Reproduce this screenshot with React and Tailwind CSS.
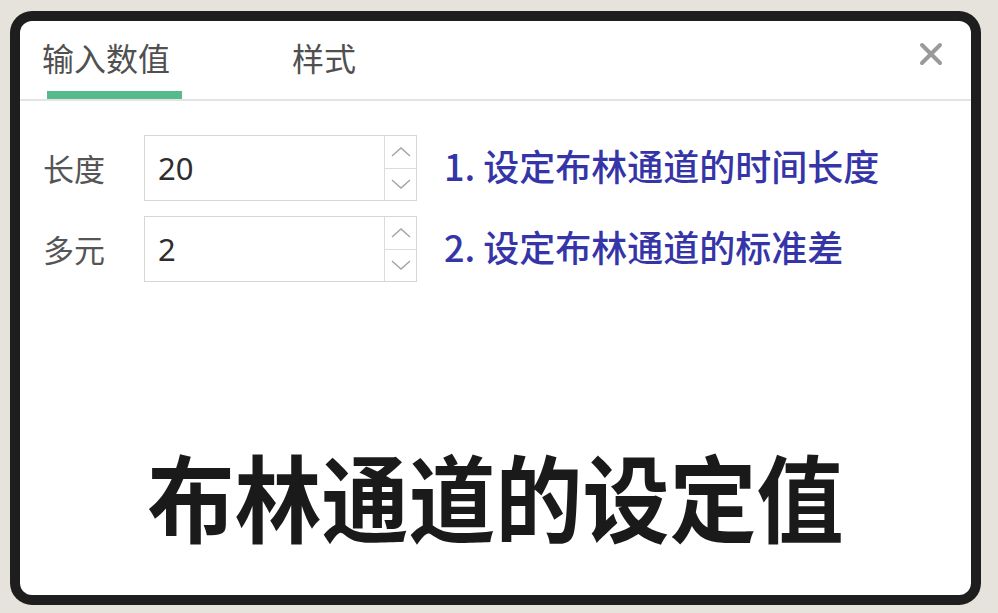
import React from 'react';

const cjk = { fontFamily: '"Noto Sans CJK SC", "Noto Sans", sans-serif' };
const latin = { fontFamily: '"Noto Sans", "Noto Sans CJK SC", sans-serif' };

function Chevron({ up }) {
  return (
    <svg width="22" height="12" viewBox="0 0 22 12" fill="none" stroke="#a3a3a3" strokeWidth="1.4">
      {up ? <path d="M2 10 L11 2 L20 10" /> : <path d="M2 2 L11 10 L20 2" />}
    </svg>
  );
}

function NumberInput({ value }) {
  return (
    <div className="flex w-[273px] h-[66px] border border-[#d6d6d6] bg-white">
      <div className="flex-1 flex items-center pl-[13px] text-[31px] text-[#2e2e2e]" style={latin}>{value}</div>
      <div className="w-[32px] flex flex-col border-l border-[#dcdcdc]">
        <div className="flex-1 flex items-center justify-center border-b border-[#dcdcdc]"><Chevron up /></div>
        <div className="flex-1 flex items-center justify-center"><Chevron /></div>
      </div>
    </div>
  );
}

const rows = [
  { label: '长度', value: '20', note: '1. 设定布林通道的时间长度' },
  { label: '多元', value: '2', note: '2. 设定布林通道的标准差' },
];

export default function App() {
  return (
    <div className="w-[998px] h-[613px] bg-[#e6e3dc] pt-[11px] pl-[10px] pr-[17px] pb-[8px]" style={cjk}>
      <div className="w-full h-full bg-[#1e1e1e] rounded-[22px] p-[10px]">
        <div className="w-full h-full bg-white rounded-[12px] flex flex-col overflow-hidden">
          {/* tabs */}
          <div className="flex h-[80px] border-b-2 border-[#e4e4e4] shrink-0">
            <div className="ml-[22px] flex flex-col justify-between">
              <div className="pt-[14px] text-[32px] leading-[44px] text-[#505050]">输入数值</div>
              <div className="ml-[5px] w-[135px] h-[8px] bg-[#55bb8c]" />
            </div>
            <div className="ml-[110px] pt-[14px] text-[32px] leading-[44px] text-[#505050]">样式</div>
            <div className="ml-auto mr-[28px] mt-[21px]">
              <svg width="24" height="24" viewBox="0 0 24 24" stroke="#9a9a9a" strokeWidth="4" strokeLinecap="round">
                <path d="M3 3 L21 21 M21 3 L3 21" />
              </svg>
            </div>
          </div>

          {/* fields */}
          <div className="flex flex-col gap-[15px] mt-[34px]">
            {rows.map((r) => (
              <div key={r.label} className="flex items-center">
                <div className="w-[124px] pl-[23px] text-[31px] text-[#555]">{r.label}</div>
                <NumberInput value={r.value} />
                <div className="ml-[27px] -mt-[6px] text-[36px] font-medium text-[#3535a8]">{r.note}</div>
              </div>
            ))}
          </div>

          {/* caption */}
          <div className="mt-[169px] text-center text-[87px] leading-none font-bold text-[#1a1a1a] scale-y-[1.1]">
            布林通道的设定值
          </div>
        </div>
      </div>
    </div>
  );
}
